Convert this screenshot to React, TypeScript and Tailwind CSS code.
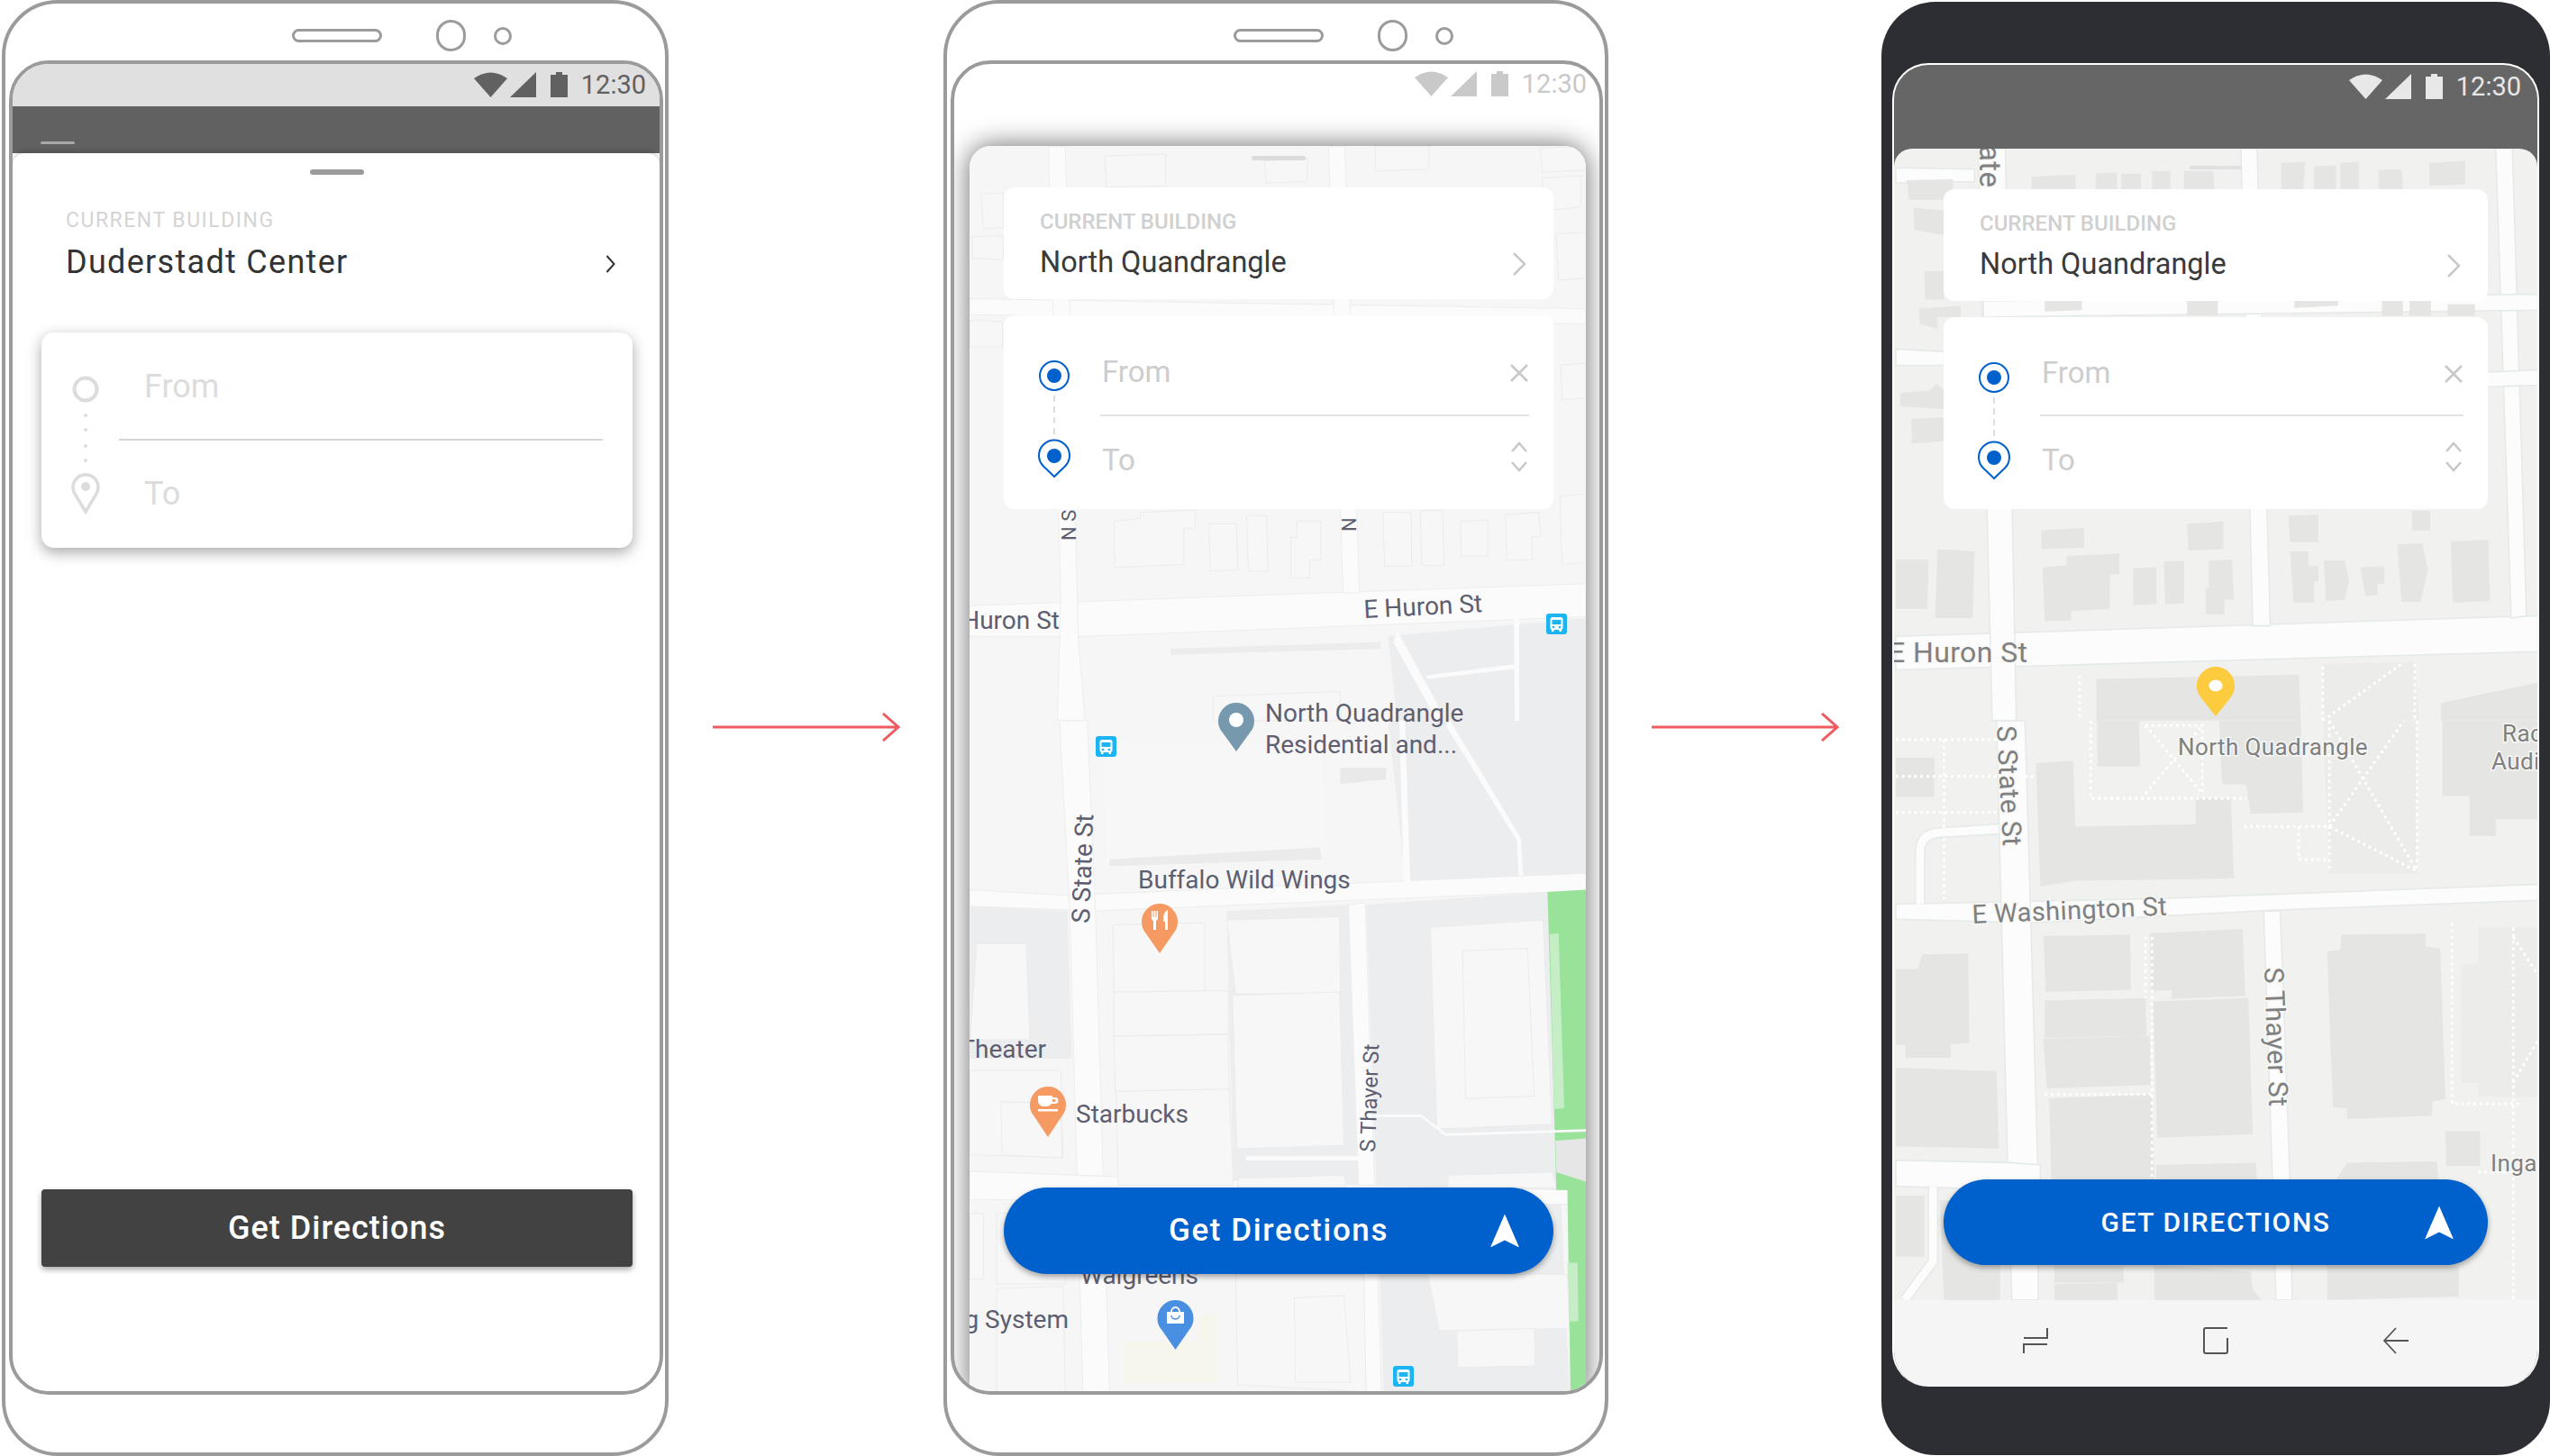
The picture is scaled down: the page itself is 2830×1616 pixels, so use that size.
import { FC, ReactNode } from "react";

// ---- map data, written in the coordinates of the crops and scaled by a <g> ----

const map2Top = [
  "400,340 537,335 537,405 403,407",
  "760,350 857,345 857,395 765,398",
  "1010,318 1132,318 1132,368 1012,372",
  "1385,322 1487,318 1487,370 1388,375",
  "1388,388 1475,382 1475,450 1393,458",
  "120,422 170,420 170,495 125,498",
  "100,515 170,513 170,565 100,562",
  "1420,510 1487,505 1487,605 1425,610",
  "94,697 168,700 168,755 94,755",
  "1430,795 1487,790 1487,865 1433,870",
  "1428,1080 1487,1075 1487,1225 1433,1228",
  "420,1135 480,1128 480,1115 605,1110 603,1150 578,1150 578,1228 422,1235",
  "635,1140 697,1140 700,1240 638,1242",
  "720,1122 765,1122 768,1243 724,1243",
  "833,1135 888,1135 888,1218 862,1218 862,1258 820,1258 820,1170 833,1170",
  "1028,1115 1092,1115 1093,1232 1032,1232",
  "1112,1112 1163,1110 1166,1230 1116,1230",
  "1203,1135 1265,1132 1265,1210 1205,1210",
  "1305,1120 1380,1115 1385,1165 1365,1170 1365,1218 1308,1218",
  "645,1515 930,1505 935,1568 645,1568",
];

const map2Bottom = [
  "418,435 625,430 625,575 420,578",
  "420,578 678,575 680,668 420,672",
  "420,672 678,668 680,785 423,790",
  "425,790 680,785 690,990 430,990",
  "675,425 930,417 932,582 695,582",
  "688,585 930,578 940,905 698,912",
  "1135,440 1390,425 1410,860 1150,870",
  "1208,490 1355,485 1370,800 1215,805",
  "110,475 222,475 230,680 95,680",
  "94,745 300,745 305,930 94,925",
  "165,812 300,815 303,932 167,925",
  "700,975 940,968 945,995 700,995",
  "1175,968 1412,962 1420,995 1175,995",
  "94,1050 125,1050 125,1190 94,1190",
  "155,1210 305,1205 310,1430 155,1430",
  "155,1050 310,1050 310,1200 155,1200",
  "695,1180 985,1180 990,1430 700,1415",
  "828,1230 940,1225 955,1410 830,1410",
  "1130,1180 1445,1180 1450,1295 1155,1300",
  "1195,1300 1370,1295 1372,1375 1197,1378",
];

const map3Top = [
  "380,385 480,380 480,412 380,412",
  "527,378 575,375 575,412 527,412",
  "585,378 630,378 630,412 585,412",
  "655,372 697,372 697,412 655,412",
  "728,372 795,372 797,412 728,412",
  "950,355 1005,352 1000,412 950,412",
  "1025,362 1075,360 1075,412 1025,412",
  "1085,355 1128,352 1128,412 1085,412",
  "1172,370 1225,368 1228,412 1172,412",
  "1288,355 1370,350 1370,402 1288,404",
  "95,392 200,390 200,435 100,435",
  "110,452 180,458 180,512 112,500",
  "135,590 180,590 180,652 137,652",
  "122,672 218,665 218,690 165,690 165,715 125,705",
  "80,855 145,850 165,835 180,850 180,890 80,885",
  "105,912 180,908 180,960 107,965",
  "410,652 495,652 495,675 410,678",
  "735,652 805,652 805,687 735,687",
  "980,652 1080,652 1080,665 980,670",
  "1180,655 1228,655 1228,687 1180,687",
  "1243,652 1292,652 1292,687 1243,687",
  "1330,662 1392,662 1392,687 1330,687",
  "402,1155 500,1148 500,1192 402,1195",
  "735,1140 818,1135 818,1195 738,1198",
  "967,1122 1035,1120 1035,1180 970,1180",
  "1248,1112 1290,1112 1290,1155 1250,1155",
  "70,1218 145,1218 142,1325 70,1325",
  "165,1195 250,1200 245,1345 160,1345",
  "405,1235 460,1230 460,1210 580,1205 580,1250 558,1250 558,1325 470,1330 470,1350 410,1352",
  "612,1237 665,1235 665,1315 612,1317",
  "682,1222 728,1220 728,1313 685,1315",
  "785,1220 838,1218 842,1305 820,1305 820,1337 778,1337 778,1280 785,1280",
  "970,1200 1012,1200 1012,1232 1035,1232 1035,1265 1025,1265 1025,1312 978,1312",
  "1047,1220 1095,1220 1105,1265 1095,1305 1052,1308",
  "1130,1235 1185,1232 1185,1270 1170,1270 1170,1295 1142,1297",
  "1215,1185 1272,1182 1285,1240 1268,1310 1225,1310",
  "1337,1178 1423,1175 1427,1308 1342,1312",
  "528,1478 990,1468 995,1568 528,1568",
  "1315,1530 1536,1485 1536,1568 1315,1568",
];

const map3Bottom = [
  "530,0 625,0 628,97 530,97",
  "808,0 995,0 1000,195 880,198 870,135 815,135",
  "1318,0 1536,0 1536,210 1440,210 1440,245 1380,245 1380,160 1318,160",
  "70,78 158,78 158,162 70,162",
  "390,90 475,85 480,225 755,220 755,165 835,165 842,335 760,337 485,340 400,352",
  "70,528 120,528 130,497 235,495 238,685 195,688 195,717 92,717 92,690 70,690",
  "70,738 300,745 305,910 70,905",
  "407,458 605,455 607,572 412,577",
  "650,452 862,443 868,585 700,592 700,572 652,575",
  "410,595 640,590 642,670 410,675",
  "406,677 650,670 652,775 415,782",
  "420,803 655,795 660,975 425,975",
  "657,597 875,590 885,880 667,887",
  "1055,490 1085,487 1088,455 1280,453 1280,480 1313,485 1325,805 1295,810 1295,840 1100,847 1100,825 1068,822",
  "1325,873 1404,873 1404,947 1327,947",
  "1100,940 1305,938 1310,977 1075,977",
  "430,950 660,950 660,977 430,977",
  "665,945 892,940 895,977 665,977",
  "70,1010 135,1010 135,1140 70,1140",
  "170,1020 308,1020 308,1232 180,1232",
  "432,1160 590,1160 590,1195 432,1195",
  "432,1198 575,1196 577,1232 432,1232",
  "700,1160 880,1172 885,1210 905,1232 660,1232 660,1160",
  "1055,1160 1355,1160 1355,1225 1055,1232",
];

const map3Dots = [
  "M70 40H300M180 40V380M70 195H300M70 118H390",
  "M515 0V165H870M640 155L770 10M640 10L770 155M640 10H770V155",
  "M865 225H1060L1260 320M1060 225L1230 0M1060 0L1260 320M990 225V295H1060M1060 0V320M1260 0V320",
  "M1340 430V815H1500M1480 440V1232M1480 460L1536 540M1480 770L1536 680",
  "M410 795H655M655 460V975M640 460V590M1400 960H1480",
];

// ---- small drawings ----

const Polys: FC<{ items: string[]; fill: string; stroke?: string; sw?: number }> = ({
  items,
  fill,
  stroke = "none",
  sw = 2,
}) => (
  <>
    {items.map((p) => (
      <polygon key={p} points={p} fill={fill} stroke={stroke} strokeWidth={sw} />
    ))}
  </>
);

const Drop: FC<{ cx: number; top: number; bottom: number; r: number; color: string; children?: ReactNode }> = ({
  cx,
  top,
  bottom,
  r,
  color,
  children,
}) => {
  const cy = top + r;
  return (
    <g>
      <path
        d={`M${cx} ${bottom}L${cx - r * 0.78} ${cy + r * 0.63}A${r} ${r} 0 1 1 ${cx + r * 0.78} ${cy + r * 0.63}Z`}
        fill={color}
      />
      {children}
    </g>
  );
};

const Bus: FC<{ x: number; y: number }> = ({ x, y }) => (
  <g transform={`translate(${x} ${y})`}>
    <rect width="23" height="23" rx="3" fill="#1bb5f3" />
    <rect x="4.5" y="4" width="14" height="14" rx="2.5" fill="#fff" />
    <rect x="6.5" y="7" width="10" height="5" fill="#1bb5f3" />
    <circle cx="8" cy="15" r="1.3" fill="#1bb5f3" />
    <circle cx="15" cy="15" r="1.3" fill="#1bb5f3" />
    <rect x="6" y="18" width="2.5" height="2" fill="#fff" />
    <rect x="14.5" y="18" width="2.5" height="2" fill="#fff" />
  </g>
);

const Map2: FC = () => (
  <svg className="absolute inset-0 w-full h-full" viewBox="1076 162 684 1386">
    <rect x="1076" y="162" width="684" height="1386" fill="#f6f6f6" />
    <g transform="translate(1030 0) scale(.491 .51)">
      <polygon points="1040,1385 1487,1345 1487,1568 1060,1568" fill="#ecedef" />
      <Polys
        items={[
          "94,1318 1487,1270 1487,1342 355,1385 94,1385",
          "94,650 1487,672 1487,705 94,685",
          "272,318 310,318 340,1400 355,1568 292,1568 300,1300",
          "905,318 942,318 975,1290 938,1290",
        ]}
        fill="#fbfbfb"
        stroke="#ededed"
      />
      <Polys items={map2Top} fill="#f7f7f7" stroke="#ebebeb" />
      <polygon points="548,1412 1022,1397 1024,1412 548,1425" fill="#ececec" />
      <polygon points="1060,1372 1150,1530 1160,1568 1150,1568 1052,1398" fill="#fbfbfb" />
      <polygon points="1125,1470 1330,1445 1330,1455 1130,1478" fill="#fbfbfb" />
      <polygon points="1324,1345 1336,1345 1336,1568 1326,1568" fill="#fbfbfb" />
    </g>
    <g transform="translate(1030 800) scale(.491 .5208)">
      <polygon points="1040,0 1487,0 1487,325 1080,352" fill="#ecedef" />
      <polygon points="94,395 315,405 325,720 94,720" fill="#ecedef" />
      <polygon points="675,405 950,392 978,990 690,990" fill="#ecedef" />
      <polygon points="990,392 1400,365 1450,1430 1030,1430" fill="#ecedef" />
      <Polys
        items={[
          "94,360 310,372 1487,325 1487,362 378,405 94,395",
          "297,0 360,0 378,400 410,1430 350,1430 320,400",
          "950,392 988,388 1025,1430 990,1430",
          "94,960 330,968 1000,990 1450,1000 1450,1030 94,1020",
        ]}
        fill="#fbfbfb"
        stroke="#ededed"
      />
      <polygon points="1065,0 1078,0 1090,350 1075,352" fill="#fbfbfb" />
      <polygon points="1180,0 1340,250 1345,330 1335,330 1331,255 1170,10" fill="#fbfbfb" />
      <polygon points="395,50 890,50 895,290 405,305" fill="#f7f7f7" />
      <polygon points="410,295 885,270 890,295 410,310" fill="#ebebeb" />
      <polygon points="932,100 1035,100 1035,125 932,135" fill="#e9e9e9" />
      <Polys items={map2Bottom} fill="#f7f7f7" stroke="#ebebeb" />
      <polygon points="1400,365 1487,360 1487,1430 1452,1430 1445,1000 1420,1000 1415,830" fill="#98e29a" />
      <polygon points="1405,455 1425,452 1438,825 1415,828" fill="#c5edc6" />
      <polygon points="1418,895 1487,890 1487,982 1420,962" fill="#e6e6e6" />
      <polygon points="1445,1155 1468,1155 1470,1280 1450,1280" fill="#c5edc6" />
      <polygon points="440,1325 612,1320 612,1268 654,1265 655,1410 442,1412" fill="#f6f6ec" />
      <path d="M1010 842H1115L1170 882L1487 873" fill="none" stroke="#fbfbfb" strokeWidth="5" />
      <rect x="718" y="928" width="258" height="9" fill="#fbfbfb" />
    </g>
    <g fontSize="28" fill="#5d5e70">
      <text x="1176" y="698" textAnchor="end">Huron St</text>
      <text x="1514" y="686" transform="rotate(-3 1514 686)">E Huron St</text>
      <text x="1194" y="600" fontSize="22" transform="rotate(-90 1194 600)">N S</text>
      <text x="1505" y="590" fontSize="22" transform="rotate(-90 1505 590)">N</text>
      <text x="1404" y="801">North Quadrangle</text>
      <text x="1404" y="836">Residential and...</text>
      <text x="1209" y="1025" transform="rotate(-88 1209 1025)">S State St</text>
      <text x="1263" y="986">Buffalo Wild Wings</text>
      <text x="1161" y="1174" textAnchor="end">Theater</text>
      <text x="1194" y="1246">Starbucks</text>
      <text x="1526" y="1279" fontSize="24" transform="rotate(-88 1526 1279)">S Thayer St</text>
      <text x="1199" y="1425">Walgreens</text>
      <text x="1186" y="1474" textAnchor="end">g System</text>
    </g>
    <Bus x={1716} y={681} />
    <Bus x={1216} y={817} />
    <Bus x={1546} y={1516} />
    <Drop cx={1372} top={780} bottom={834} r={20} color="#7799ad">
      <circle cx="1372" cy="799" r="8" fill="#fff" />
    </Drop>
    <Drop cx={1287} top={1003} bottom={1058} r={20} color="#f59a62">
      <path d="M1278 1011v8a3 3 0 0 0 2 3v10h3v-10a3 3 0 0 0 2-3v-8h-1.500v7h-1v-7h-2v7h-1v-7z" fill="#fff" />
      <path d="M1296 1010c-3 1-5 5-5 10v3h2v9h3z" fill="#fff" />
    </Drop>
    <Drop cx={1163} top={1206} bottom={1262} r={20} color="#f59a62">
      <path d="M1152 1216h16v2h3a3 3 0 0 1 0 7h-4a7 7 0 0 1-6 3h-3a6 6 0 0 1-6-6zM1168 1220v3h2a1.500 1.500 0 0 0 0-3z" fill="#fff" />
      <rect x="1152" y="1231" width="22" height="2.500" fill="#fff" />
    </Drop>
    <Drop cx={1304.5} top={1443} bottom={1498} r={20} color="#4a90e2">
      <path d="M1295 1456h19v13h-19z" fill="#fff" />
      <path d="M1300 1456a4.500 5 0 0 1 9 0" fill="none" stroke="#fff" strokeWidth="1.800" />
      <path d="M1300 1460a4.500 4 0 0 0 9 0" fill="none" stroke="#4a90e2" strokeWidth="1.500" />
    </Drop>
  </svg>
);

const Map3: FC = () => (
  <svg className="absolute inset-0 w-full h-full" viewBox="2102 165 714 1278">
    <rect x="2102" y="165" width="714" height="1278" fill="#f1f1ef" />
    <g transform="translate(2070 0) scale(.486 .51)">
      <Polys
        items={[
          "70,1385 1536,1340 1536,1418 70,1458",
          "258,323 320,323 345,1568 290,1568",
          "858,323 895,323 925,1362 885,1362",
          "1440,323 1478,323 1510,1340 1475,1345",
          "70,760 180,765 180,795 70,795",
          "270,655 1536,640 1536,675 270,690",
          "1420,810 1536,805 1536,838 1420,842",
          "70,365 250,368 250,395 70,398",
        ]}
        fill="#fbfcfb"
        stroke="#e4eae8"
        sw={3}
      />
      <polygon points="1045,1445 1255,1440 1265,1568 1045,1568" fill="#ececea" />
      <Polys items={map3Top} fill="#e5e5e3" />
      <path d="M490 1470V1568M1045 1450V1568M1045 1568L1225 1445M1255 1445V1568" fill="none" stroke="#fff" strokeWidth="6" strokeDasharray="6 8" />
    </g>
    <g transform="translate(2070 800) scale(.486 .5217)">
      <polygon points="1045,0 1260,0 1260,325 1060,325" fill="#ececea" />
      <polygon points="1360,520 1400,515 1400,440 1536,440 1536,800 1400,800 1400,770 1360,770" fill="#ececea" />
      <Polys
        items={[
          "70,390 680,378 1536,348 1536,382 950,402 375,430 70,422",
          "300,0 365,0 395,977 395,1232 335,1232 325,940",
          "910,405 948,405 970,977 975,1232 938,1232 930,977",
          "70,935 330,940 400,945 400,1000 70,990",
        ]}
        fill="#fbfcfb"
        stroke="#e4eae8"
        sw={3}
      />
      <path d="M125 390V280Q125 240 170 238L305 230M90 1232L155 1150V990" fill="none" stroke="#e4eae8" strokeWidth="24" />
      <path d="M125 390V280Q125 240 170 238L305 230M90 1232L155 1150V990" fill="none" stroke="#fbfcfb" strokeWidth="18" />
      <Polys items={map3Bottom} fill="#e5e5e3" />
      {map3Dots.map((d) => (
        <path key={d} d={d} fill="none" stroke="#fff" strokeWidth="6" strokeDasharray="6 8" />
      ))}
    </g>
    <g fill="#7f8080" stroke="#f7f7f6" strokeWidth="3" paintOrder="stroke" style={{ letterSpacing: "0.4px" }}>
      <text x="2096" y="735" fontSize="32">E Huron St</text>
      <text x="2197" y="165" fontSize="33" transform="rotate(90 2197 165)" dx="-4">ate</text>
      <text x="2216" y="806" fontSize="30" transform="rotate(87 2216 806)">S State St</text>
      <text x="2417" y="838" fontSize="26">North Quadrangle</text>
      <text x="2777" y="823" fontSize="26">Rac</text>
      <text x="2765" y="854" fontSize="26">Audi</text>
      <text x="2189" y="1025" fontSize="29" transform="rotate(-2.500 2189 1025)">E Washington St</text>
      <text x="2513" y="1074" fontSize="30" transform="rotate(88 2513 1074)">S Thayer St</text>
      <text x="2764" y="1300" fontSize="26">Inga</text>
    </g>
    <Drop cx={2459} top={740} bottom={795} r={21} color="#fdcb3e">
      <ellipse cx="2459" cy="761" rx="7.500" ry="6.500" fill="#fff" />
    </Drop>
  </svg>
);

// ---- phone parts ----

const Hardware: FC = () => (
  <div className="h-[63px] flex items-center pl-[318px] pt-[8px]">
    <div className="w-[100px] h-[15px] rounded-full border-[3px] border-[#9b9b9b]" />
    <div className="w-[33px] h-[35px] rounded-full border-[3px] border-[#9b9b9b] ml-[60px]" />
    <div className="w-[20px] h-[20px] rounded-full border-[3px] border-[#9b9b9b] ml-[31px]" />
  </div>
);

const StatusIcons: FC<{ color: string; pr: string }> = ({ color, pr }) => (
  <div className={`flex items-center justify-end ${pr}`}>
    <svg width="37" height="28" viewBox="0 0 37 28">
      <path d="M0 7Q18.500-6 37 7L18.500 28Z" fill={color} />
    </svg>
    <svg width="29" height="28" viewBox="0 0 29 28" className="ml-[3px]">
      <path d="M29 0V28H0Z" fill={color} />
    </svg>
    <svg width="19" height="28" viewBox="0 0 19 28" className="ml-[16px]">
      <path d="M0 3H6V0H13V3H19V28H0Z" fill={color} />
    </svg>
    <span className="ml-[15px] text-[29px] leading-[28px]" style={{ color }}>
      12:30
    </span>
  </div>
);

const Arrow: FC = () => (
  <svg width="208" height="32" viewBox="0 0 208 32" className="mb-[2px]">
    <path d="M0 16H206M189 1L206 16L189 31" fill="none" stroke="#ee5c62" strokeWidth="3" />
  </svg>
);

const NavArrow: FC = () => (
  <svg width="32" height="37" viewBox="0 0 32 37" className="absolute right-[38px] top-1/2 -translate-y-1/2">
    <path d="M16 0L32 37L16 29L0 37Z" fill="#fff" />
  </svg>
);

const RouteDots: FC = () => (
  <svg width="36" height="132" viewBox="0 0 36 132">
    <circle cx="18" cy="18" r="16" fill="none" stroke="#0060cc" strokeWidth="2" />
    <circle cx="18" cy="18" r="8" fill="#0060cc" />
    <path d="M18 40V84" stroke="#dddddd" strokeWidth="2" strokeDasharray="7 5" />
    <path d="M18 130L6 118.500A17 17 0 1 1 30 118.500Z" fill="none" stroke="#0060cc" strokeWidth="2" />
    <circle cx="18" cy="107" r="8" fill="#0060cc" />
  </svg>
);

// current building + from/to cards used by the two map screens
const MapCards: FC<{ routeH: string; fromH: string }> = ({ routeH, fromH }) => (
  <>
    <div className="bg-white rounded-[12px] h-[124px] pl-[40px] pr-[30px] pt-[26px] flex items-start justify-between">
      <div>
        <div className="text-[24px] leading-[24px] text-[#d0d0d0] font-medium">CURRENT BUILDING</div>
        <div className="text-[32.500px] leading-[40px] mt-[13px] text-[#3a3a3a]">North Quandrangle</div>
      </div>
      <svg width="16" height="26" viewBox="0 0 16 26" className="mt-[46px]">
        <path d="M2 1L14 13L2 25" fill="none" stroke="#c8c8c8" strokeWidth="2.500" />
      </svg>
    </div>
    <div className={`bg-white rounded-[12px] mt-[18px] ${routeH} flex`}>
      <div className="w-[107px] pl-[38px] pt-[49px] shrink-0">
        <RouteDots />
      </div>
      <div className="flex-1 mr-[27px]">
        <div className={`${fromH} pt-[16px] flex items-center justify-between border-b-2 border-[#e3e3e3] pl-[2px] pr-[1px]`}>
          <span className="text-[33px] text-[#cdcdcd]">From</span>
          <svg width="20" height="20" viewBox="0 0 20 20" className="mt-[2px]">
            <path d="M1 1L19 19M19 1L1 19" stroke="#c8c8c8" strokeWidth="2.500" />
          </svg>
        </div>
        <div className="h-[98px] flex items-center justify-between pl-[2px] pr-[2px]">
          <span className="text-[33px] text-[#cdcdcd]">To</span>
          <svg width="18" height="34" viewBox="0 0 18 34" className="mb-[8px]">
            <path d="M1 11L9 2L17 11M1 23L9 32L17 23" fill="none" stroke="#c8c8c8" strokeWidth="2.500" />
          </svg>
        </div>
      </div>
    </div>
  </>
);

const WireOne: FC = () => (
  <div className="ml-[2px] w-[740px] h-[1616px] shrink-0 rounded-[62px] border-4 border-[#9b9b9b]">
    <Hardware />
    <div className="ml-1 mr-[2px] h-[1481px] rounded-[44px] border-4 border-[#9b9b9b] overflow-hidden flex flex-col">
      <div className="h-[47px] bg-[#e0e0e0] pt-[9px]">
        <StatusIcons color="#616161" pr="pr-[15px]" />
      </div>
      <div className="h-[52px] bg-[#616161] pl-[31px] pt-[39px]">
        <div className="w-[38px] h-[3px] bg-[#a8a8a8] rounded-full" />
      </div>
      <div className="flex-1 bg-white rounded-t-[14px] pl-[32px] pr-[30px] pt-[18px] shadow-[0_-2px_6px_rgba(0,0,0,0.2)]">
        <div className="w-[60px] h-[6px] rounded-full bg-[#9b9b9b] mx-auto" />
        <div className="pl-[27px] mt-[39px] flex items-start justify-between pr-[19px]">
          <div>
            <div className="text-[23px] leading-[24px] tracking-[1.5px] text-[#d4d4d4]">CURRENT BUILDING</div>
            <div className="text-[36px] leading-[44px] mt-[12px] tracking-[1.300px] text-[#333333]">Duderstadt Center</div>
          </div>
          <svg width="11" height="20" viewBox="0 0 11 20" className="mt-[50px]">
            <path d="M1.500 1L9.500 10L1.500 19" fill="none" stroke="#333333" strokeWidth="2" />
          </svg>
        </div>
        <div className="mt-[56px] h-[239px] rounded-[14px] bg-white shadow-[0_5px_16px_rgba(0,0,0,0.35)] flex">
          <div className="w-[86px] shrink-0 pl-[33px] pt-[48px]">
            <svg width="32" height="155" viewBox="0 0 32 155">
              <circle cx="16" cy="15" r="12.500" fill="none" stroke="#dcdcdc" strokeWidth="4" />
              <circle cx="16" cy="44" r="2" fill="#dcdcdc" />
              <circle cx="16" cy="60" r="2" fill="#dcdcdc" />
              <circle cx="16" cy="78" r="2" fill="#dcdcdc" />
              <circle cx="16" cy="94" r="2" fill="#dcdcdc" />
              <path d="M16 151L4 131A14 14 0 1 1 28 131Z" fill="none" stroke="#dcdcdc" strokeWidth="3.500" />
              <circle cx="16" cy="123" r="5" fill="#dcdcdc" />
            </svg>
          </div>
          <div className="flex-1 mr-[33px]">
            <div className="h-[120px] flex items-center pt-[2px] pl-[28px] border-b-2 border-[#d5d5d5] text-[36px] text-[#dcdcdc]">
              From
            </div>
            <div className="h-[118px] flex items-center pl-[28px] text-[36px] text-[#dcdcdc]">To</div>
          </div>
        </div>
        <div className="mt-[712px] h-[86px] rounded-[4px] bg-[#424242] shadow-[0_3px_6px_rgba(0,0,0,0.35)] flex items-center justify-center text-[36px] font-medium tracking-[1px] text-white">
          Get Directions
        </div>
      </div>
    </div>
  </div>
);

const WireTwo: FC = () => (
  <div className="w-[738px] h-[1616px] shrink-0 rounded-[62px] border-4 border-[#9b9b9b]">
    <Hardware />
    <div className="ml-1 mr-[2px] h-[1481px] rounded-[44px] border-4 border-[#9b9b9b] overflow-hidden bg-white">
      <div className="h-[91px] pt-[8px]">
        <StatusIcons color="#c9c9c9" pr="pr-[14px]" />
      </div>
      <div className="relative ml-[17px] w-[684px] h-[1386px] rounded-t-[24px] shadow-[0_0_30px_rgba(0,0,0,0.6)]">
        <div className="absolute inset-0 rounded-t-[24px] overflow-hidden">
          <Map2 />
        </div>
        <div className="relative pl-[38px] pr-[36px] pt-[11px]">
          <div className="w-[60px] h-[5px] rounded-full bg-[#dcdcdc] mx-auto" />
          <div className="mt-[30px]">
            <MapCards routeH="h-[215px]" fromH="h-[112px]" />
          </div>
          <div className="relative mt-[753px] h-[96px] rounded-full bg-[#0060cc] shadow-[0_3px_6px_rgba(0,0,0,0.35)] flex items-center justify-center text-[35px] font-medium tracking-[1.600px] text-white">
            Get Directions
            <NavArrow />
          </div>
        </div>
      </div>
    </div>
  </div>
);

const HiFi: FC = () => (
  <div className="w-[742px] h-[1613px] mt-[2px] shrink-0 rounded-[60px] bg-[#2c2e33] pt-[68px] px-[12px]">
    <div className="h-[1469px] rounded-[40px] border-2 border-white border-b-0 overflow-hidden bg-[#666666]">
      <div className="h-[93px] pt-[10px]">
        <StatusIcons color="#e8e8e8" pr="pr-[18px]" />
      </div>
      <div className="relative h-[1278px] rounded-t-[20px] overflow-hidden">
        <Map3 />
        <div className="relative px-[55px] pt-[19px]">
          <div className="w-[58px] h-[4px] rounded-full bg-[#e0e0e0] mx-auto" />
          <div className="mt-[22px]">
            <MapCards routeH="h-[213px]" fromH="h-[110px]" />
          </div>
          <div className="relative mt-[744px] h-[95px] rounded-full bg-[#0060cc] shadow-[0_3px_6px_rgba(0,0,0,0.35)] flex items-center justify-center text-[30px] font-medium tracking-[1.600px] text-white">
            GET DIRECTIONS
            <NavArrow />
          </div>
        </div>
      </div>
      <div className="h-[96px] pb-[6px] bg-[#f5f5f5] flex items-center justify-center gap-[172px]">
        <svg width="28" height="30" viewBox="0 0 28 30">
          <path d="M1 12H27V1M27 19H1V29" fill="none" stroke="#555555" strokeWidth="2" />
        </svg>
        <svg width="28" height="30" viewBox="0 0 28 30">
          <path d="M27 1H3A2 2 0 0 0 1 3V27A2 2 0 0 0 3 29H8M8 29H25A2 2 0 0 0 27 27V12" fill="none" stroke="#555555" strokeWidth="2" />
        </svg>
        <svg width="28" height="30" viewBox="0 0 28 30">
          <path d="M28 15H2M14 1L1 15L14 29" fill="none" stroke="#555555" strokeWidth="1.800" />
        </svg>
      </div>
    </div>
  </div>
);

const App: FC = () => {
  return (
    <div className="w-[2830px] h-[1616px] overflow-hidden bg-white flex [font-family:Roboto,sans-serif]">
      <WireOne />
      <div className="w-[305px] shrink-0 flex items-center justify-center">
        <Arrow />
      </div>
      <WireTwo />
      <div className="w-[303px] shrink-0 flex items-center justify-center">
        <Arrow />
      </div>
      <HiFi />
    </div>
  );
};

export default App;
